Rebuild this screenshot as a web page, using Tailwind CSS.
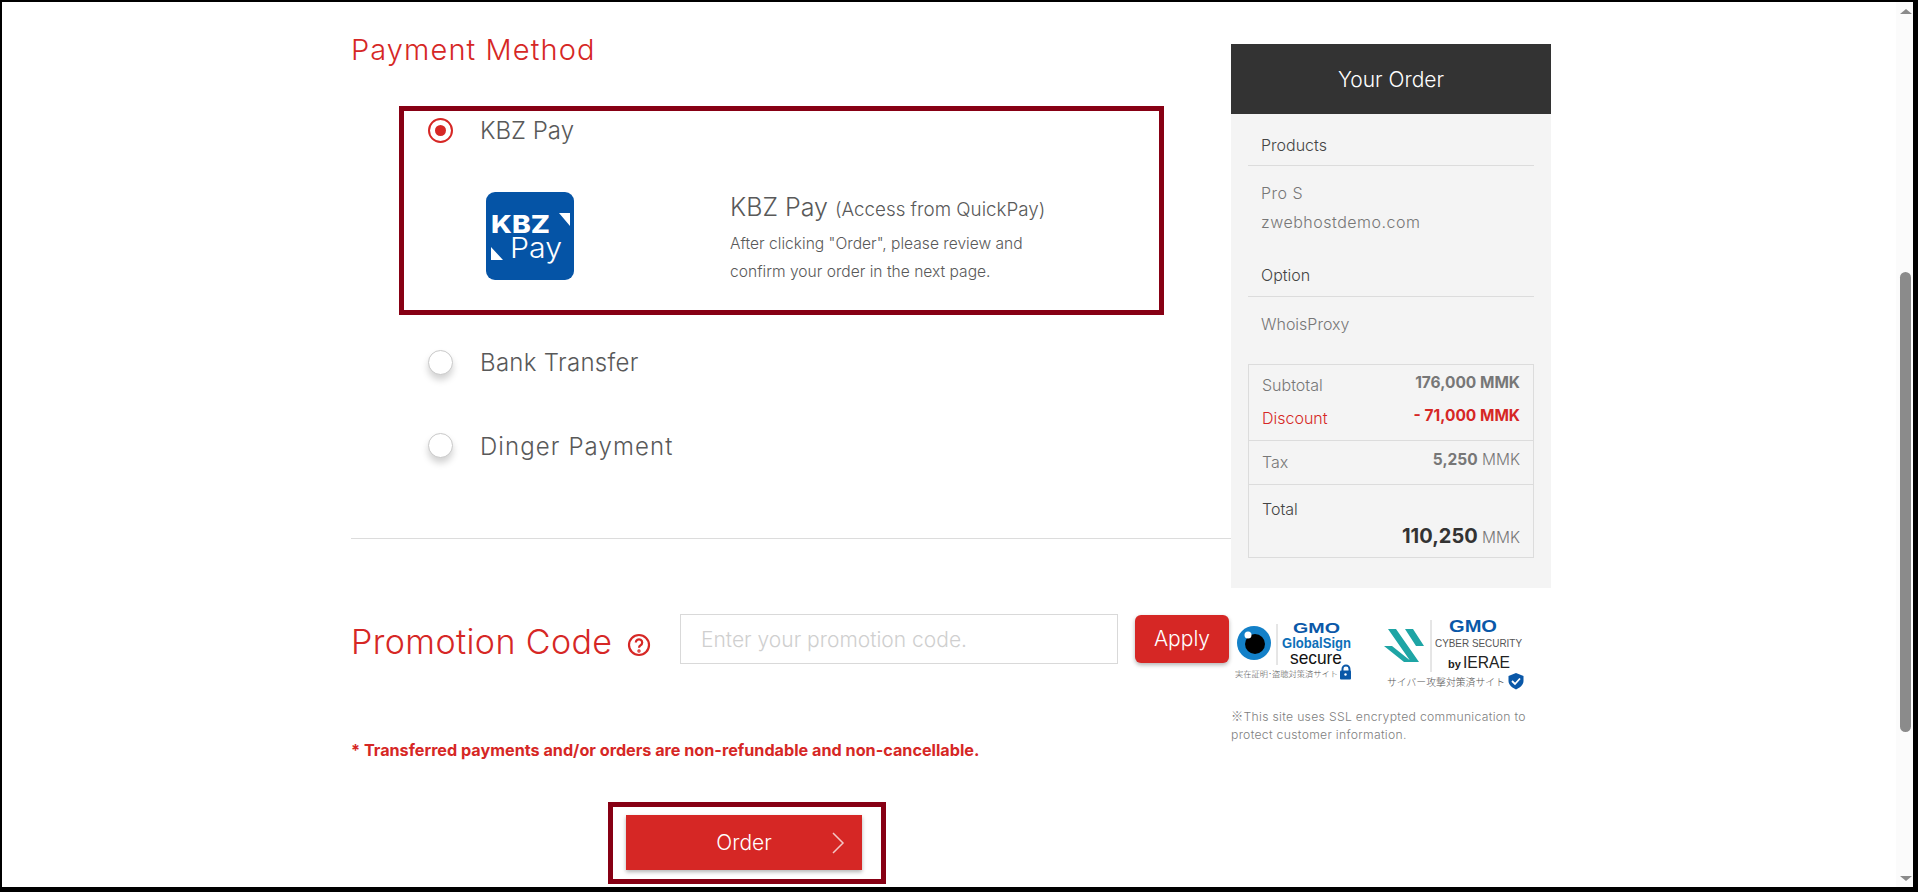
<!DOCTYPE html>
<html lang="en">

<head>
  <meta charset="UTF-8">
  <title>Payment Method</title>
  <script src="https://cdn.jsdelivr.net/npm/@tailwindcss/browser@4"></script>
</head>

<body class="bg-black">
  <div class="relative ml-[2px] mt-[2px] w-[1911px] h-[885px] bg-white overflow-hidden flex font-['Inter','Noto_Sans_CJK_JP',sans-serif] font-light text-[#595959]">
    <!-- left column -->
    <div class="ml-[349px] w-[880px] shrink-0">
      <h2 class="mt-[30px] h-[36px] leading-[36px] text-[29px] text-[#d62725] tracking-[1.1px]">Payment Method</h2>

      <div class="mt-[38px] ml-[48px] w-[765px] h-[209px] border-[5px] border-[#870014]">
        <div class="flex items-center h-[38px] pl-[24px]">
          <span class="w-[25px] h-[25px] rounded-full border-2 border-[#d62725] bg-white flex items-center justify-center">
            <span class="w-[11px] h-[11px] rounded-full bg-[#d62725]"></span>
          </span>
          <span class="ml-[27px] mt-[2px] text-[24px]">KBZ Pay</span>
        </div>
        <div class="flex mt-[43px] pl-[82px]">
          <svg class="w-[88px] h-[88px]" viewBox="0 0 88 88">
            <rect width="88" height="88" rx="9" fill="#0554a6" />
            <text x="5" y="41" font-family="Inter" font-weight="800" font-size="25" fill="#fff" textLength="59" lengthAdjust="spacingAndGlyphs">KBZ</text>
            <text x="24" y="66" font-family="Inter" font-weight="300" font-size="28" fill="#fff" textLength="52" lengthAdjust="spacingAndGlyphs">Pay</text>
            <path d="M73 21H84V34Z M5 55L17 68H5Z" fill="#fff" />
          </svg>
          <div class="ml-[156px]">
            <p class="text-[25px] leading-[30px]">KBZ Pay <span class="text-[18.8px]">(Access from QuickPay)</span></p>
            <p class="mt-[5px] text-[15.6px] leading-[28px]">After clicking "Order", please review and<br>confirm your order in the next page.</p>
          </div>
        </div>
      </div>

      <div class="mt-[29px] ml-[48px] flex items-center h-[38px] pl-[29px]">
        <span class="mt-[-2px] w-[25px] h-[25px] rounded-full border border-[#c9c9c9] bg-white shadow-[0_5px_7px_rgba(0,0,0,0.18)]"></span>
        <span class="ml-[27px] text-[24px] tracking-[0.3px]">Bank Transfer</span>
      </div>
      <div class="mt-[45px] ml-[48px] flex items-center h-[38px] pl-[29px]">
        <span class="mt-[-2px] w-[25px] h-[25px] rounded-full border border-[#c9c9c9] bg-white shadow-[0_5px_7px_rgba(0,0,0,0.18)]"></span>
        <span class="ml-[27px] mt-[1px] text-[24px] tracking-[1.1px]">Dinger Payment</span>
      </div>

      <div class="mt-[73px] border-t border-[#dcdcdc]"></div>

      <div class="mt-[75px] flex h-[50px]">
        <h2 class="text-[34px] leading-[50px] mt-[3px] text-[#d62725] tracking-[0.4px]">Promotion Code</h2>
        <svg class="ml-[15px] mt-[19px] w-[24px] h-[24px]" viewBox="0 0 24 24" fill="none" stroke="#d62725" stroke-width="2.2">
          <circle cx="12" cy="12" r="10" />
          <path d="M8.8 9.5a3.2 3.2 0 1 1 4.8 2.8c-1 .6-1.6 1.2-1.6 2.4" />
          <circle cx="12" cy="18" r="0.6" />
        </svg>
        <input class="absolute left-[678px] w-[438px] h-[50px] border border-[#d9d9d9] px-[20px] text-[21px] font-light placeholder:text-[#cfcfcf] outline-none" placeholder="Enter your promotion code.">
        <button class="absolute left-[1133px] w-[94px] h-[48px] mt-[1px] rounded-[6px] bg-[#d62725] text-white text-[21px] font-light shadow-[0_2px_4px_rgba(0,0,0,0.3)]">Apply</button>
      </div>

      <p class="mt-[76px] text-[16.2px] font-bold text-[#d62725] leading-[20px]">* Transferred payments and/or orders are non-refundable and non-cancellable.</p>

      <div class="mt-[42px] ml-[257px] w-[278px] h-[82px] border-[5px] border-[#870014] flex">
        <button class="relative mt-[8px] ml-[13px] w-[236px] h-[55px] bg-[#d62725] text-white text-[21px] font-light shadow-[0_2px_4px_rgba(0,0,0,0.3)]">
          Order
          <svg class="absolute right-[17px] top-[17px] w-[14px] h-[22px]" viewBox="0 0 14 22" fill="none" stroke="#f3c6c5" stroke-width="1.5">
            <path d="M2 1L12 11L2 21" />
          </svg>
        </button>
      </div>
    </div>

    <!-- right column -->
    <div class="w-[320px] shrink-0">
      <div class="mt-[42px] bg-[#f4f4f4] h-[544px]">
        <div class="h-[70px] pt-[1px] bg-[#333333] text-white text-[21px] flex items-center justify-center">Your Order</div>
        <div class="px-[17px]">
          <h3 class="h-[52px] pt-[19px] pl-[13px] text-[16px] leading-[24px] text-[#444] border-b border-[#dcdcdc]">Products</h3>
          <p class="pt-[13px] pl-[13px] text-[16px] leading-[29px] text-[#777] tracking-[0.5px]">Pro S<br>zwebhostdemo.com</p>
          <h3 class="mt-[9px] h-[51px] pt-[17px] pl-[13px] text-[16px] leading-[24px] text-[#444] border-b border-[#dcdcdc]">Option</h3>
          <p class="pt-[13px] pl-[13px] text-[16px] leading-[29px] text-[#777]">WhoisProxy</p>
          <div class="mt-[25px] border border-[#dcdcdc] h-[194px] text-[#777] text-[16px]">
            <div class="h-[76px] border-b border-[#dcdcdc] px-[13px] pt-[6px]">
              <div class="flex justify-between h-[33px]"><span class="pt-[2px]">Subtotal</span><b class="font-bold text-[15.5px]">176,000 MMK</b></div>
              <div class="flex justify-between text-[#d62725]"><span class="pt-[2px]">Discount</span><b class="font-bold text-[15.5px]">- 71,000 MMK</b></div>
            </div>
            <div class="h-[44px] border-b border-[#dcdcdc] px-[13px] pt-[7px] flex justify-between"><span class="pt-[2px]">Tax</span><span class="text-[15.5px]"><b class="font-bold">5,250</b> MMK</span></div>
            <div class="px-[13px] pt-[12px] text-[#444]">Total
              <p class="text-right text-[#777] text-[15.5px]"><b class="font-bold text-[#333] text-[20px]">110,250</b> MMK</p>
            </div>
          </div>
        </div>
      </div>

      <!-- seals -->
      <div class="mt-[22px] flex h-[76px]">
        <svg class="w-[150px] h-[76px] shrink-0" viewBox="0 0 150 76">
          <circle cx="23" cy="33" r="17" fill="#1380c8" />
          <circle cx="24" cy="34" r="10" fill="#000" />
          <circle cx="17" cy="25" r="3.5" fill="#fff" />
          <path d="M46 14V55" stroke="#ccc" />
          <text x="62" y="23" font-family="Liberation Sans" font-weight="700" font-size="15" fill="#0a58a8" textLength="47" lengthAdjust="spacingAndGlyphs">GMO</text>
          <text x="51" y="38" font-family="Liberation Sans" font-weight="700" font-size="15" fill="#0d6fb8" textLength="69" lengthAdjust="spacingAndGlyphs">GlobalSign</text>
          <text x="59" y="54" font-family="Liberation Sans" font-size="19" fill="#111" textLength="52" lengthAdjust="spacingAndGlyphs">secure</text>
          <text x="4" y="67" font-family="Noto Sans CJK JP" font-size="8" fill="#555" textLength="103" lengthAdjust="spacingAndGlyphs">実在証明･盗聴対策済サイト</text>
          <path d="M111.500 62v-3a3 3 0 0 1 7 0v3" fill="none" stroke="#0a58a8" stroke-width="2" />
          <rect x="109" y="60.500" width="11" height="9" rx="1" fill="#0a58a8" />
          <circle cx="114.500" cy="64.500" r="1.200" fill="#fff" />
        </svg>
        <svg class="w-[170px] h-[82px] shrink-0" viewBox="0 0 170 82">
          <path d="M7 19H15L38 52H30Z M24 19H32L43 36H35Z M3 36H11L31 52H23Z" fill="#1ea5a5" />
          <path d="M50 10V62" stroke="#ccc" />
          <text x="68" y="22" font-family="Liberation Sans" font-weight="700" font-size="16" fill="#0a58a8" textLength="48" lengthAdjust="spacingAndGlyphs">GMO</text>
          <text x="54" y="37" font-family="Liberation Sans" font-size="11" fill="#555" textLength="87" lengthAdjust="spacingAndGlyphs">CYBER SECURITY</text>
          <text x="67" y="58" font-family="Liberation Sans" font-weight="700" font-size="11" fill="#222">by</text>
          <text x="82" y="58" font-family="Liberation Sans" font-size="17" fill="#222" textLength="47" lengthAdjust="spacingAndGlyphs">IERAE</text>
          <text x="6" y="76" font-family="Noto Sans CJK JP" font-size="10" fill="#555" textLength="118" lengthAdjust="spacingAndGlyphs">サイバー攻撃対策済サイト</text>
          <path d="M127.500 66L135 63L142.500 66V71C142.500 75 138.500 78 135 79.500C131.500 78 127.500 75 127.500 71Z" fill="#0a58a8" />
          <path d="M131 71L134 74L139 68.500" fill="none" stroke="#fff" stroke-width="1.800" />
        </svg>
      </div>
      <p class="mt-[21px] w-[300px] text-[12.2px] leading-[18px] text-[#808080] tracking-[0.3px]"><span class="font-['Noto_Sans_CJK_JP']">※</span>This site uses SSL encrypted communication to protect customer information.</p>
    </div>

    <!-- scrollbar -->
    <div class="absolute right-0 top-0 w-[17px] h-full bg-[#fbfbfb]">
      <div class="absolute left-[4px] top-[7px] w-0 h-0 border-x-[6px] border-x-transparent border-b-[5px] border-b-[#8b8b8b]"></div>
      <div class="absolute left-[4px] top-[270px] w-[11px] h-[460px] rounded-[6px] bg-[#8b8b8b]"></div>
      <div class="absolute left-[4px] bottom-[6px] w-0 h-0 border-x-[6px] border-x-transparent border-t-[5px] border-t-[#8b8b8b]"></div>
    </div>
  </div>
</body>

</html>
